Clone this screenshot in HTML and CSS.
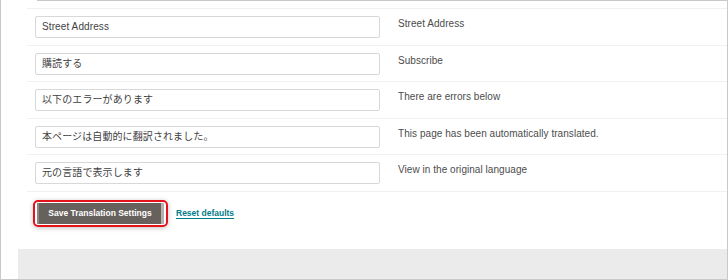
FILE: index.html
```html
<!DOCTYPE html>
<html lang="ja">
<head>
<meta charset="utf-8">
<title>Translation Settings</title>
<link rel="stylesheet" href="styles.css">
</head>
<body>
<div class="frame">
  <div class="cut-edge"></div>
  <div class="rows">
    <div class="row">
      <div class="field">Street Address</div>
      <div class="orig">Street Address</div>
    </div>
    <div class="row">
      <div class="field">購読する</div>
      <div class="orig">Subscribe</div>
    </div>
    <div class="row">
      <div class="field">以下のエラーがあります</div>
      <div class="orig">There are errors below</div>
    </div>
    <div class="row">
      <div class="field">本ページは自動的に翻訳されました。</div>
      <div class="orig">This page has been automatically translated.</div>
    </div>
    <div class="row">
      <div class="field">元の言語で表示します</div>
      <div class="orig">View in the original language</div>
    </div>
  </div>
  <div class="actions">
    <div class="highlight">
      <button class="save">Save Translation Settings</button>
    </div>
    <a class="reset" href="#">Reset defaults</a>
  </div>
  <div class="footer"></div>
</div>
</body>
</html>
```

FILE: styles.css
```css
html, body {
  margin: 0;
  padding: 0;
  background: #ffffff;
}
body {
  width: 728px;
  height: 280px;
  overflow: hidden;
  font-family: "Liberation Sans", "Noto Sans CJK JP", sans-serif;
}
.frame {
  box-sizing: border-box;
  width: 728px;
  height: 280px;
  border-left: 1px solid #c9c9c9;
  border-right: 1px solid #c9c9c9;
  border-bottom: 1px solid #c9c9c9;
  display: flex;
  flex-direction: column;
}
.cut-edge {
  height: 1px;
  margin-left: 36px;
  background: #c9c9c9;
  flex: none;
}
.rows {
  margin-top: 7px;
  margin-left: 26px;
  flex: none;
}
.row {
  box-sizing: border-box;
  height: 36.6px;
  border-top: 1px solid #f1f1f1;
  display: grid;
  grid-template-columns: 345px 1fr;
  column-gap: 18px;
  padding-left: 8px;
  align-items: start;
}
.row:last-child {
  border-bottom: 1px solid #f1f1f1;
  height: 37.6px;
}
.field {
  box-sizing: border-box;
  margin-top: 7px;
  height: 22px;
  border: 1px solid #d8d8d8;
  border-radius: 2px;
  padding: 0 6px;
  font-size: 10px;
  line-height: 20px;
  color: #3f3f3f;
  letter-spacing: 0.1px;
}
.orig {
  margin-top: 9px;
  font-size: 10px;
  line-height: 12px;
  color: #4c4c4c;
  letter-spacing: 0.05px;
}
.actions {
  display: flex;
  align-items: center;
  gap: 8px;
  margin-top: 8px;
  margin-left: 32px;
  flex: none;
}
.highlight {
  box-sizing: border-box;
  width: 135px;
  height: 27px;
  border: 2.5px solid #e3121b;
  border-radius: 5px;
  padding: 1px 2px;
  box-shadow: 0 1px 5px rgba(0, 0, 0, 0.25);
  display: flex;
}
.save {
  flex: 1;
  margin: 0;
  border: none;
  border-left: 2px solid #8c8782;
  border-right: 3px solid #b5b1ad;
  background: #67615d;
  color: #ffffff;
  font-family: "Liberation Sans", sans-serif;
  font-weight: bold;
  font-size: 8.5px;
  padding: 0;
  cursor: pointer;
}
.reset {
  color: #007c89;
  font-size: 8.5px;
  font-weight: bold;
  text-decoration: underline;
  text-underline-offset: 2px;
}
.footer {
  margin-top: auto;
  margin-left: 17px;
  height: 30px;
  background: #ebebeb;
  flex: none;
}
```
